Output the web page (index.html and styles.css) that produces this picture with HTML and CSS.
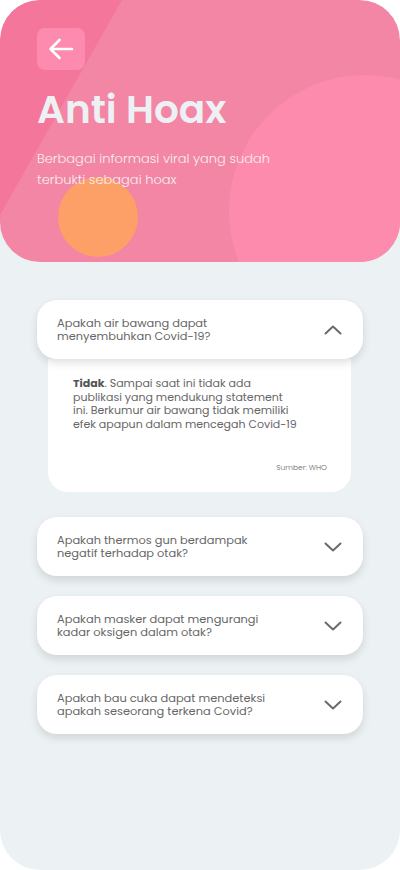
FILE: index.html
```html
<!DOCTYPE html>
<html lang="id">
<head>
<meta charset="utf-8">
<title>Anti Hoax</title>
<link rel="stylesheet" href="styles.css">
</head>
<body>
<div class="page">
  <header class="hero">
    <div class="stripe"></div>
    <div class="blob-big"></div>
    <div class="blob-orange"></div>
    <div class="hero-content">
      <button class="back" aria-label="Kembali">
        <svg width="26" height="22" viewBox="0 0 26 22" fill="none" stroke="#ffffff" stroke-width="2.6" stroke-linecap="round" stroke-linejoin="round">
          <path d="M24 11H2.5M11.5 2L2.5 11l9 9"/>
        </svg>
      </button>
      <h1 class="title">Anti Hoax</h1>
      <p class="subtitle">Berbagai informasi viral yang sudah<br>terbukti sebagai hoax</p>
    </div>
  </header>

  <main class="faq">
    <div class="item open">
      <div class="card">
        <span class="q">Apakah air bawang dapat<br>menyembuhkan Covid-19?</span>
        <svg class="chev" width="18" height="10" viewBox="0 0 18 10" fill="none" stroke="#6a6a6a" stroke-width="2" stroke-linecap="round" stroke-linejoin="round"><path d="M1.5 8.5L9 1.5l7.5 7"/></svg>
      </div>
      <div class="answer">
        <p class="a"><b>Tidak</b>. Sampai saat ini tidak ada<br>publikasi yang mendukung statement<br>ini. Berkumur air bawang tidak memiliki<br>efek apapun dalam mencegah Covid-19</p>
        <p class="src">Sumber: WHO</p>
      </div>
    </div>

    <div class="item">
      <div class="card">
        <span class="q">Apakah thermos gun berdampak<br>negatif terhadap otak?</span>
        <svg class="chev" width="18" height="10" viewBox="0 0 18 10" fill="none" stroke="#6a6a6a" stroke-width="2" stroke-linecap="round" stroke-linejoin="round"><path d="M1.5 1.5L9 8.5l7.5-7"/></svg>
      </div>
    </div>

    <div class="item">
      <div class="card">
        <span class="q">Apakah masker dapat mengurangi<br>kadar oksigen dalam otak?</span>
        <svg class="chev" width="18" height="10" viewBox="0 0 18 10" fill="none" stroke="#6a6a6a" stroke-width="2" stroke-linecap="round" stroke-linejoin="round"><path d="M1.5 1.5L9 8.5l7.5-7"/></svg>
      </div>
    </div>

    <div class="item">
      <div class="card">
        <span class="q">Apakah bau cuka dapat mendeteksi<br>apakah seseorang terkena Covid?</span>
        <svg class="chev" width="18" height="10" viewBox="0 0 18 10" fill="none" stroke="#6a6a6a" stroke-width="2" stroke-linecap="round" stroke-linejoin="round"><path d="M1.5 1.5L9 8.5l7.5-7"/></svg>
      </div>
    </div>
  </main>
</div>
</body>
</html>
```

FILE: styles.css
```css
* { box-sizing: border-box; }

html, body {
  margin: 0;
  padding: 0;
  background: #ffffff;
}

body {
  font-family: "Poppins", "Open Sans", "DejaVu Sans", sans-serif;
}

.page {
  width: 400px;
  height: 870px;
  background: #ecf1f4;
  border-radius: 40px;
  overflow: hidden;
}

.hero {
  position: relative;
  height: 262px;
  background: #f286a4;
  border-radius: 40px;
  overflow: hidden;
}

.stripe {
  position: absolute;
  left: 0;
  top: 0;
  width: 122px;
  height: 215px;
  background: #f4779b;
  clip-path: polygon(0 0, 100% 0, 0 100%);
}

.blob-big {
  position: absolute;
  left: 229px;
  top: 75px;
  width: 272px;
  height: 272px;
  border-radius: 50%;
  background: #fd8bae;
}

.blob-orange {
  position: absolute;
  left: 58px;
  top: 177px;
  width: 80px;
  height: 80px;
  border-radius: 50%;
  background: #fca068;
}

.hero-content {
  position: relative;
  padding: 28px 37px 0;
}

.back {
  display: flex;
  align-items: center;
  justify-content: center;
  width: 48px;
  height: 42px;
  padding: 0;
  border: none;
  border-radius: 8px;
  background: #fd8aaf;
}

.title {
  margin: 16px 0 0;
  font-size: 39px;
  line-height: 48px;
  font-weight: 600;
  color: #eef1f4;
  letter-spacing: 0;
}

.subtitle {
  margin: 14px 0 0;
  font-size: 13px;
  line-height: 21px;
  font-weight: 300;
  color: #f7eef2;
}

.faq {
  display: flex;
  flex-direction: column;
  gap: 20px;
  padding: 38px 37px 0 37px;
}

.card {
  position: relative;
  z-index: 1;
  display: flex;
  align-items: center;
  justify-content: space-between;
  height: 59px;
  padding: 0 20px;
  background: #ffffff;
  border-radius: 20px;
  box-shadow: 0 4px 8px rgba(0, 0, 0, 0.12);
}

.q {
  font-size: 11.4px;
  line-height: 13px;
  font-weight: 400;
  color: #666666;
}

.chev {
  margin-right: 1px;
}

.answer {
  margin: 0 12px 5px 11px;
  padding: 18px 20px 19px 25px;
  background: #ffffff;
  border-radius: 0 0 20px 20px;
}

.a {
  margin: 0;
  font-size: 11px;
  line-height: 13.5px;
  font-weight: 400;
  color: #666666;
}

.a b {
  font-weight: 700;
  color: #555555;
}

.src {
  margin: 32px 4px 0 0;
  text-align: right;
  font-size: 7.5px;
  line-height: 10px;
  font-weight: 300;
  color: #666666;
}
```
